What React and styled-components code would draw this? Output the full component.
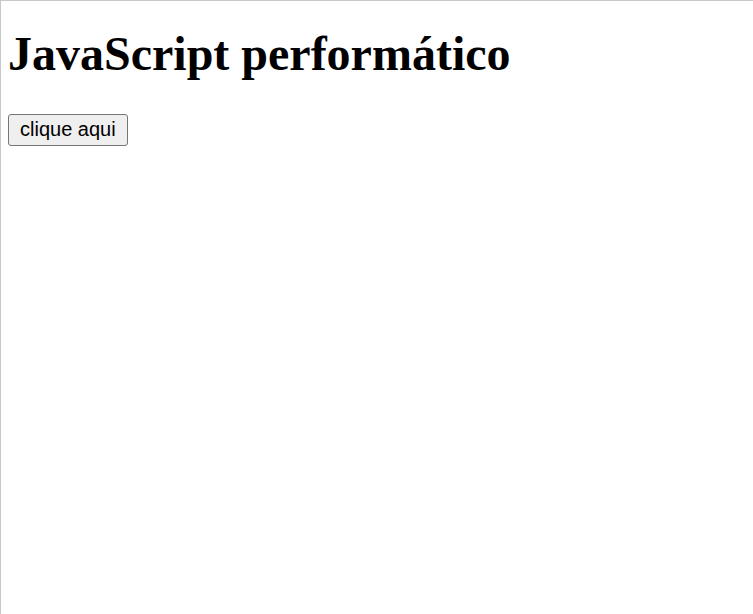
import React from "react";
import styled, { createGlobalStyle } from "styled-components";

const Global = createGlobalStyle`
  html, body { margin: 0; padding: 0; background: #fff; }
`;

const Frame = styled.div`
  box-sizing: border-box;
  min-height: 100vh;
  border-top: 1px solid #c8c8c8;
  border-left: 1px solid #c8c8c8;
  padding: 0 7px;
  display: flow-root;
`;

const Title = styled.h1`
  font-family: "Liberation Serif", "Times New Roman", serif;
  font-weight: bold;
  font-size: 48px;
  line-height: normal;
  margin: 25px 0 33px;
  color: #000;
`;

const Button = styled.button`
  font-family: "Liberation Sans", Arial, sans-serif;
  font-size: 20px;
  color: #000;
  background: #efefef;
  border: 1px solid #767676;
  border-radius: 3px;
  padding: 3px 11px 4px;
  line-height: normal;
`;

export default function App() {
  return (
    <>
      <Global />
      <Frame>
        <Title>JavaScript performático</Title>
        <Button type="button">clique aqui</Button>
      </Frame>
    </>
  );
}
